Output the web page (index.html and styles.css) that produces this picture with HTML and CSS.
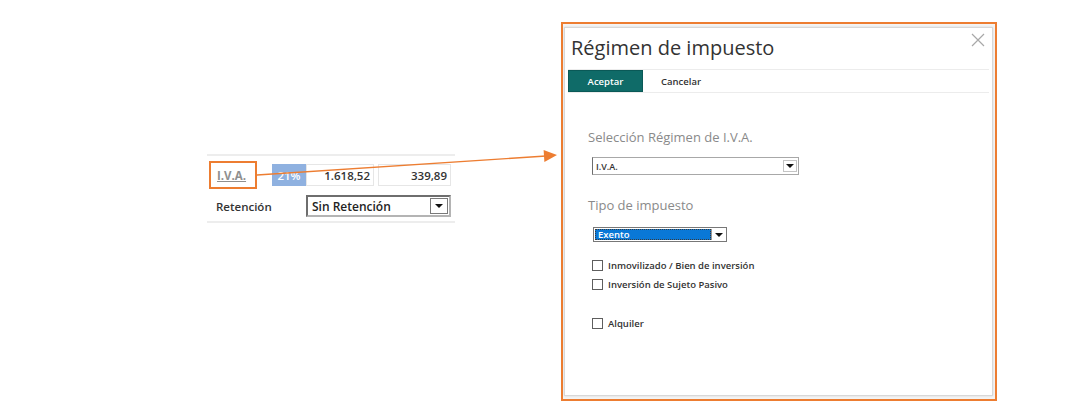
FILE: index.html
```html
<!DOCTYPE html>
<html lang="es">
<head>
    <meta charset="UTF-8">
    <meta name="viewport" content="width=device-width, initial-scale=1.0">
    <title>Régimen de impuesto</title>
    <link rel="stylesheet" href="styles.css">
</head>
<body>
    <div class="page">
        <!-- Resumen de impuestos -->
        <section class="summary">
            <div class="row row-iva">
                <span class="iva-label">I.V.A.</span>
                <span class="pct">21%</span>
                <span class="amount amount-base">1.618,52</span>
                <span class="amount amount-quota">339,89</span>
            </div>
            <div class="row row-ret">
                <span class="ret-label">Retención</span>
                <div class="combo combo-ret">
                    <span class="combo-text">Sin Retención</span>
                    <span class="combo-btn"><i class="caret"></i></span>
                </div>
            </div>
        </section>

        <!-- Ventana Régimen de impuesto -->
        <section class="frame">
            <div class="dialog">
                <div class="dialog-head">
                    <h1>Régimen de impuesto</h1>
                    <span class="close">
                        <svg width="14" height="14" viewBox="0 0 14 14">
                            <path d="M1 1 L13 13 M13 1 L1 13" stroke="#a8a8a8" stroke-width="1.2" fill="none"/>
                        </svg>
                    </span>
                </div>
                <div class="toolbar">
                    <button class="btn-primary">Aceptar</button>
                    <button class="btn-link">Cancelar</button>
                </div>
                <div class="dialog-body">
                    <h2 class="field-title">Selección Régimen de I.V.A.</h2>
                    <div class="combo combo-regimen">
                        <span class="combo-text">I.V.A.</span>
                        <span class="combo-btn"><i class="caret"></i></span>
                    </div>

                    <h2 class="field-title field-title-tipo">Tipo de impuesto</h2>
                    <div class="combo combo-tipo">
                        <span class="combo-text">Exento</span>
                        <span class="combo-btn"><i class="caret"></i></span>
                    </div>

                    <label class="check check-first"><span class="box"></span>Inmovilizado / Bien de inversión</label>
                    <label class="check"><span class="box"></span>Inversión de Sujeto Pasivo</label>
                    <label class="check check-alone"><span class="box"></span>Alquiler</label>
                </div>
            </div>
        </section>
    </div>

    <!-- Flecha de llamada -->
    <svg class="callout" width="1068" height="414" viewBox="0 0 1068 414">
        <line x1="257" y1="175" x2="546" y2="156" stroke="#ed7d31" stroke-width="1.4"/>
        <polygon points="557,155 544.4,161.9 543.6,149.9" fill="#ed7d31"/>
    </svg>
</body>
</html>
```

FILE: styles.css
```css
/* Global */
body {
    margin: 0;
    padding: 0;
    background-color: #fff;
    font-family: 'Open Sans', 'Noto Sans', sans-serif;
    color: #333;
    width: 1068px;
    height: 414px;
    overflow: hidden;
    position: relative;
}

.page {
    display: flex;
    align-items: flex-start;
    padding: 22px 0 0 207px;
}

/* Summary (left) */
.summary {
    width: 248px;
    margin-top: 132px;
    border-top: 2px solid #ededed;
    border-bottom: 2px solid #ededed;
}

.row {
    display: flex;
    align-items: center;
}

.row-iva {
    padding: 5px 0 3px;
}

.iva-label {
    box-sizing: border-box;
    width: 48px;
    height: 28px;
    margin-left: 2px;
    padding-left: 6px;
    border: 2px solid #ed7d31;
    display: flex;
    align-items: center;
    font-size: 11.5px;
    font-weight: 700;
    color: #8f8f8f;
    text-decoration: underline;
}

.pct {
    box-sizing: border-box;
    width: 34px;
    height: 22px;
    margin-left: 15px;
    background-color: #8fb1e0;
    color: #fff;
    font-size: 11.5px;
    font-weight: 600;
    display: flex;
    align-items: center;
    justify-content: center;
}

.amount {
    box-sizing: border-box;
    height: 22px;
    border: 1px solid #e6e6e6;
    padding-right: 3px;
    font-size: 11.5px;
    font-weight: 600;
    color: #333;
    display: flex;
    align-items: center;
    justify-content: flex-end;
}

.amount-base {
    width: 68px;
}

.amount-quota {
    width: 73px;
    margin-left: 4px;
}

.row-ret {
    padding: 3px 0 4px;
}

.ret-label {
    box-sizing: border-box;
    width: 99px;
    padding-left: 9px;
    font-size: 11.5px;
    font-weight: 600;
    color: #333;
}

/* Combos */
.combo {
    box-sizing: border-box;
    display: flex;
    align-items: stretch;
    background-color: #fff;
}

.combo-text {
    flex: 1;
    display: flex;
    align-items: center;
    white-space: nowrap;
}

.combo-btn {
    box-sizing: border-box;
    display: flex;
    align-items: center;
    justify-content: center;
    background-color: #fff;
}

.caret {
    width: 0;
    height: 0;
    border-left: 4px solid transparent;
    border-right: 4px solid transparent;
    border-top: 4px solid #111;
}

.combo-ret {
    width: 145px;
    height: 22px;
    border: 2px solid #6e6e6e;
    border-right-color: #b4b4b4;
    border-bottom-color: #b4b4b4;
}

.combo-ret .combo-text {
    padding-left: 4px;
    font-size: 12px;
    font-weight: 600;
    color: #222;
}

.combo-ret .combo-btn {
    width: 18px;
    margin: 1px;
    border: 1px solid #7a7a7a;
}

/* Frame + dialog (right) */
.frame {
    box-sizing: border-box;
    width: 436px;
    height: 379px;
    margin-left: 106px;
    border: 2px solid #ed7d31;
    padding: 3px 2px 3px 1px;
    background-color: #f4f4f4;
    display: flex;
    flex-direction: column;
}

.dialog {
    flex: 1;
    background-color: #fff;
    border: 1px solid #d8d8d8;
    box-shadow: 0 0 2px rgba(0, 0, 0, 0.12);
}

.dialog-head {
    box-sizing: border-box;
    height: 41px;
    padding: 5px 7px 0 6px;
    display: flex;
    justify-content: space-between;
    align-items: flex-start;
}

.dialog-head h1 {
    margin: 0;
    font-size: 20px;
    font-weight: 400;
    line-height: 29px;
    color: #333;
}

.close {
    display: flex;
}

.toolbar {
    display: flex;
    align-items: center;
    margin: 0 3px 0 3px;
    border-top: 1px solid #ececec;
    border-bottom: 1px solid #ececec;
}

.btn-primary {
    width: 75px;
    height: 22px;
    margin: 0;
    padding: 0;
    background-color: #0f6b68;
    border: 1px solid #0a5957;
    color: #fff;
    font-family: 'Open Sans', 'Noto Sans', sans-serif;
    font-size: 9.5px;
    font-weight: 600;
    cursor: pointer;
}

.btn-link {
    margin-left: 18px;
    padding: 0;
    background: none;
    border: none;
    color: #333;
    font-family: 'Open Sans', 'Noto Sans', sans-serif;
    font-size: 9.5px;
    font-weight: 600;
    cursor: pointer;
}

.dialog-body {
    padding: 35px 0 0 23px;
}

.field-title {
    margin: 0;
    font-size: 13px;
    font-weight: 400;
    line-height: 18px;
    color: #8a8a8a;
}

.combo-regimen {
    width: 207px;
    height: 18px;
    margin: 11px 0 0 4px;
    border: 1px solid #a8a8a8;
    border-left-color: #6d6d6d;
}

.combo-regimen .combo-text {
    padding-left: 3px;
    font-size: 9px;
    font-weight: 600;
    color: #333;
}

.combo-regimen .combo-btn {
    width: 14px;
    margin: 2px 1px;
    border: 1px solid #c4c4c4;
}

.field-title-tipo {
    margin-top: 21px;
}

.combo-tipo {
    width: 134px;
    height: 15px;
    margin: 13px 0 0 5px;
    border: 1px solid #777;
    padding: 1px;
}

.combo-tipo .combo-text {
    background-color: #0a78d7;
    color: #fff;
    padding-left: 2px;
    font-size: 9.5px;
    font-weight: 600;
    border: 1px dotted #3a3a3a;
}

.combo-tipo .combo-btn {
    width: 14px;
    border-left: 1px solid #9a9a9a;
}

/* Checkboxes */
.check {
    display: flex;
    align-items: center;
    height: 19px;
    margin-left: 4px;
    font-size: 9.5px;
    font-weight: 600;
    color: #333;
}

.check-first {
    margin-top: 14px;
}

.check-alone {
    margin-top: 20px;
}

.box {
    box-sizing: border-box;
    width: 11px;
    height: 11px;
    margin-right: 5px;
    border: 1px solid #5e5e5e;
    background-color: #fff;
}

/* Callout arrow */
.callout {
    position: absolute;
    left: 0;
    top: 0;
    pointer-events: none;
}
```
